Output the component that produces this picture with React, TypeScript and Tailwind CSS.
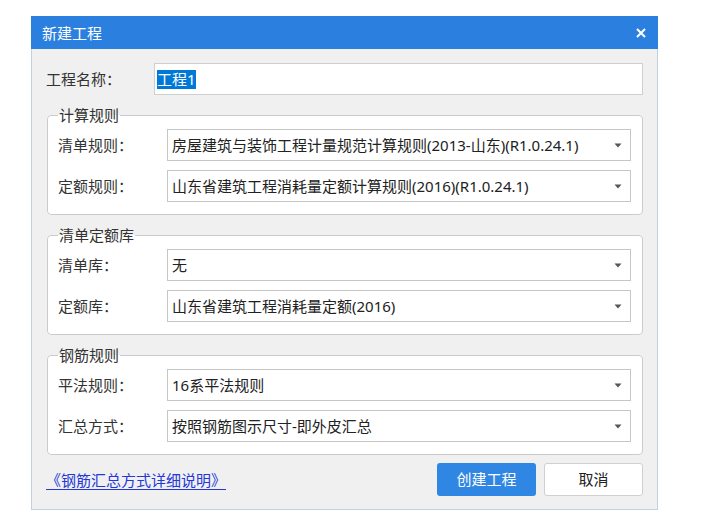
import React from 'react';

const font = { fontFamily: '"Noto Sans", "Noto Sans CJK SC", sans-serif' };

interface SelectRowProps {
  label: string;
  value: string;
}

const SelectRow: React.FC<SelectRowProps> = ({ label, value }) => (
  <div className="flex items-center">
    <div className="w-[109px] shrink-0 text-[15px] leading-[20px] text-[#333]">{label}</div>
    <div className="flex h-[32px] flex-1 items-center justify-between border border-[#c6c6c6] bg-white pl-[4px] pr-[8px]">
      <span className="text-[15px] leading-[20px] text-[#222]">{value}</span>
      <svg width="8" height="5" viewBox="0 0 8 5" className="shrink-0">
        <path d="M0.5 0.5 H7.5 L4 4.5 Z" fill="#555" />
      </svg>
    </div>
  </div>
);

interface GroupProps {
  title: string;
  className?: string;
  children: React.ReactNode;
}

const Group: React.FC<GroupProps> = ({ title, className = '', children }) => (
  <fieldset
    className={`ml-[1px] rounded-[4px] border border-[#cbcbcb] bg-white pl-[10px] pr-[11px] pt-[4px] pb-[12px] ${className}`}
  >
    <legend className="px-[1px] text-[15px] leading-[20px] text-[#333]">{title}</legend>
    <div className="flex flex-col gap-[9px]">{children}</div>
  </fieldset>
);

export default function App() {
  return (
    <div className="min-h-screen bg-white pl-[31px] pt-[16px]" style={font}>
      <div className="w-[627px]">
        {/* title bar */}
        <div className="flex h-[33px] items-center justify-between bg-[#2b80df] pl-[11px] pr-[12px]">
          <span className="text-[15px] leading-[20px] text-white">新建工程</span>
          <svg width="10" height="10" viewBox="0 0 10 10">
            <path d="M1 1 L9 9 M9 1 L1 9" stroke="white" strokeWidth="2" />
          </svg>
        </div>

        <div className="h-[461px] border-x border-b border-[#c4d0de] bg-[#f0f0f0] px-[14px] pt-[14px]">
          <div className="flex items-center">
            <div className="w-[108px] shrink-0 text-[15px] leading-[20px] text-[#333]">工程名称：</div>
            <div className="flex h-[32px] flex-1 items-center border border-[#cfcfcf] bg-white pl-[2px]">
              <span className="bg-[#0078d7] text-[15px] leading-[19px] text-white">工程1</span>
            </div>
          </div>

          <Group title="计算规则" className="mt-[10px]">
            <SelectRow label="清单规则：" value="房屋建筑与装饰工程计量规范计算规则(2013-山东)(R1.0.24.1)" />
            <SelectRow label="定额规则：" value="山东省建筑工程消耗量定额计算规则(2016)(R1.0.24.1)" />
          </Group>

          <Group title="清单定额库" className="mt-[10px]">
            <SelectRow label="清单库：" value="无" />
            <SelectRow label="定额库：" value="山东省建筑工程消耗量定额(2016)" />
          </Group>

          <Group title="钢筋规则" className="mt-[10px]">
            <SelectRow label="平法规则：" value="16系平法规则" />
            <SelectRow label="汇总方式：" value="按照钢筋图示尺寸-即外皮汇总" />
          </Group>

          <div className="mt-[8px] flex items-center justify-between">
            <a href="#" className="text-[15px] leading-[20px] text-[#2438d8] underline underline-offset-[3px]">
              《钢筋汇总方式详细说明》
            </a>
            <div className="flex gap-[8px]">
              <button className="h-[33px] w-[99px] rounded-[3px] bg-[#2f86e3] text-[15px] text-white">创建工程</button>
              <button className="h-[33px] w-[99px] rounded-[3px] border border-[#d0d0d0] bg-white text-[15px] text-[#222]">
                取消
              </button>
            </div>
          </div>
        </div>
      </div>
    </div>
  );
}
